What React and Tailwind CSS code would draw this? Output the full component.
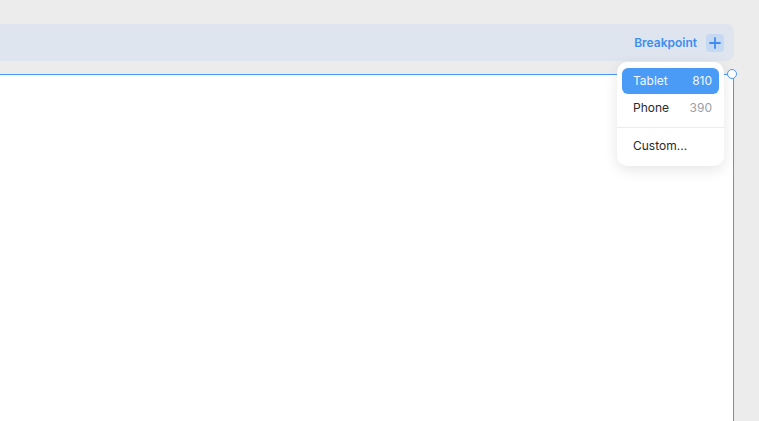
import React from "react";

const Plus = () => (
  <svg width="12" height="12" viewBox="0 0 12 12" fill="none">
    <path d="M6 1v10M1 6h10" stroke="#3d8ef0" strokeWidth="1.8" strokeLinecap="round" />
  </svg>
);

const App = () => {
  return (
    <div
      className="relative w-[759px] h-[421px] overflow-hidden bg-[#ececec]"
      style={{ fontFamily: "Inter, 'Noto Sans', sans-serif" }}
    >
      <div className="pt-[24px] flex flex-col h-full">
        <div className="w-[734px] h-[37px] bg-[#dee5ee] rounded-r-[8px] flex items-center justify-end pr-[10px] gap-[9px]">
          <span className="text-[12px] font-semibold text-[#3d8ef0]">Breakpoint</span>
          <div className="w-[18px] h-[18px] rounded-[4px] bg-[#c6d9f2] flex items-center justify-center">
            <Plus />
          </div>
        </div>
        <div className="mt-[13px] w-[734px] flex-1 bg-white border-t border-r border-[#4a98f7]" />
      </div>

      <div className="absolute left-[727px] top-[69px] w-[10px] h-[10px] rounded-full bg-white border-[1.5px] border-[#4a98f7]" />

      <div className="absolute left-[617px] top-[62px] w-[107px] h-[104px] bg-white rounded-[10px] shadow-[0_4px_14px_rgba(0,0,0,0.10)] pt-[6px] px-[5px] text-[12px]">
        <div className="h-[26px] rounded-[6px] bg-[#4a9bf6] text-[#f4f8ff] flex items-center justify-between pl-[11px] pr-[7px]">
          <span>Tablet</span>
          <span>810</span>
        </div>
        <div className="h-[26px] mt-[1px] flex items-center justify-between pl-[11px] pr-[7px] text-[#2a2a2a]">
          <span>Phone</span>
          <span className="text-[#9aa0a8]">390</span>
        </div>
        <div className="-mx-[5px] mt-[6px] border-t border-[#ececec]" />
        <div className="h-[24px] mt-[6px] flex items-center px-[11px] text-[#2a2a2a]">
          <span>Custom...</span>
        </div>
      </div>
    </div>
  );
};

export default App;
